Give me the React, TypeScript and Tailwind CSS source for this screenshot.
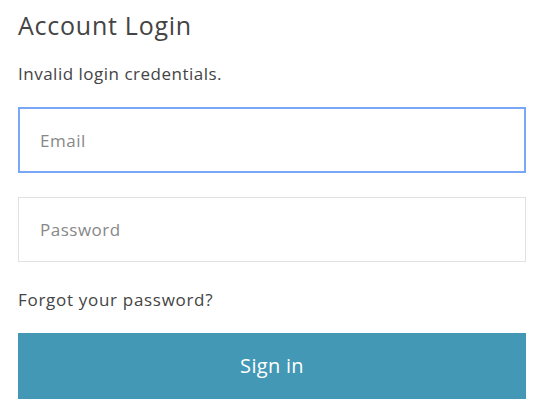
import React from 'react';

export default function App() {
  return (
    <div className="min-h-screen bg-white font-['Open_Sans',sans-serif] text-[#444]">
      <div className="px-[18px] pr-[15px] pt-[10px]">
        <h1 className="text-[25px] leading-[30px] font-normal tracking-[0.75px] text-[#444]">Account Login</h1>
        <p className="mt-[23px] text-[17px] leading-[22px] tracking-[0.5px] text-[#444]">Invalid login credentials.</p>

        <form className="mt-[22px] flex flex-col" onSubmit={(e) => e.preventDefault()}>
          <input
            type="email"
            placeholder="Email"
            autoFocus
            className="h-[66px] w-full border-2 border-[#7aa7f5] px-[20px] text-[17px] tracking-[0.5px] text-[#333] caret-[#333] outline-none placeholder:text-[#888]"
          />
          <input
            type="password"
            placeholder="Password"
            className="mt-[24px] h-[65px] w-full border border-[#e2e2e2] px-[21px] text-[17px] tracking-[0.5px] outline-none placeholder:text-[#888]"
          />
          <a href="#" className="mt-[27px] text-[17px] leading-[22px] tracking-[0.7px] text-[#444]">Forgot your password?</a>
          <button
            type="submit"
            className="mt-[22px] h-[66px] w-full bg-[#4398b5] text-[20px] tracking-[0.3px] text-white"
          >
            Sign in
          </button>
        </form>
      </div>
    </div>
  );
}
